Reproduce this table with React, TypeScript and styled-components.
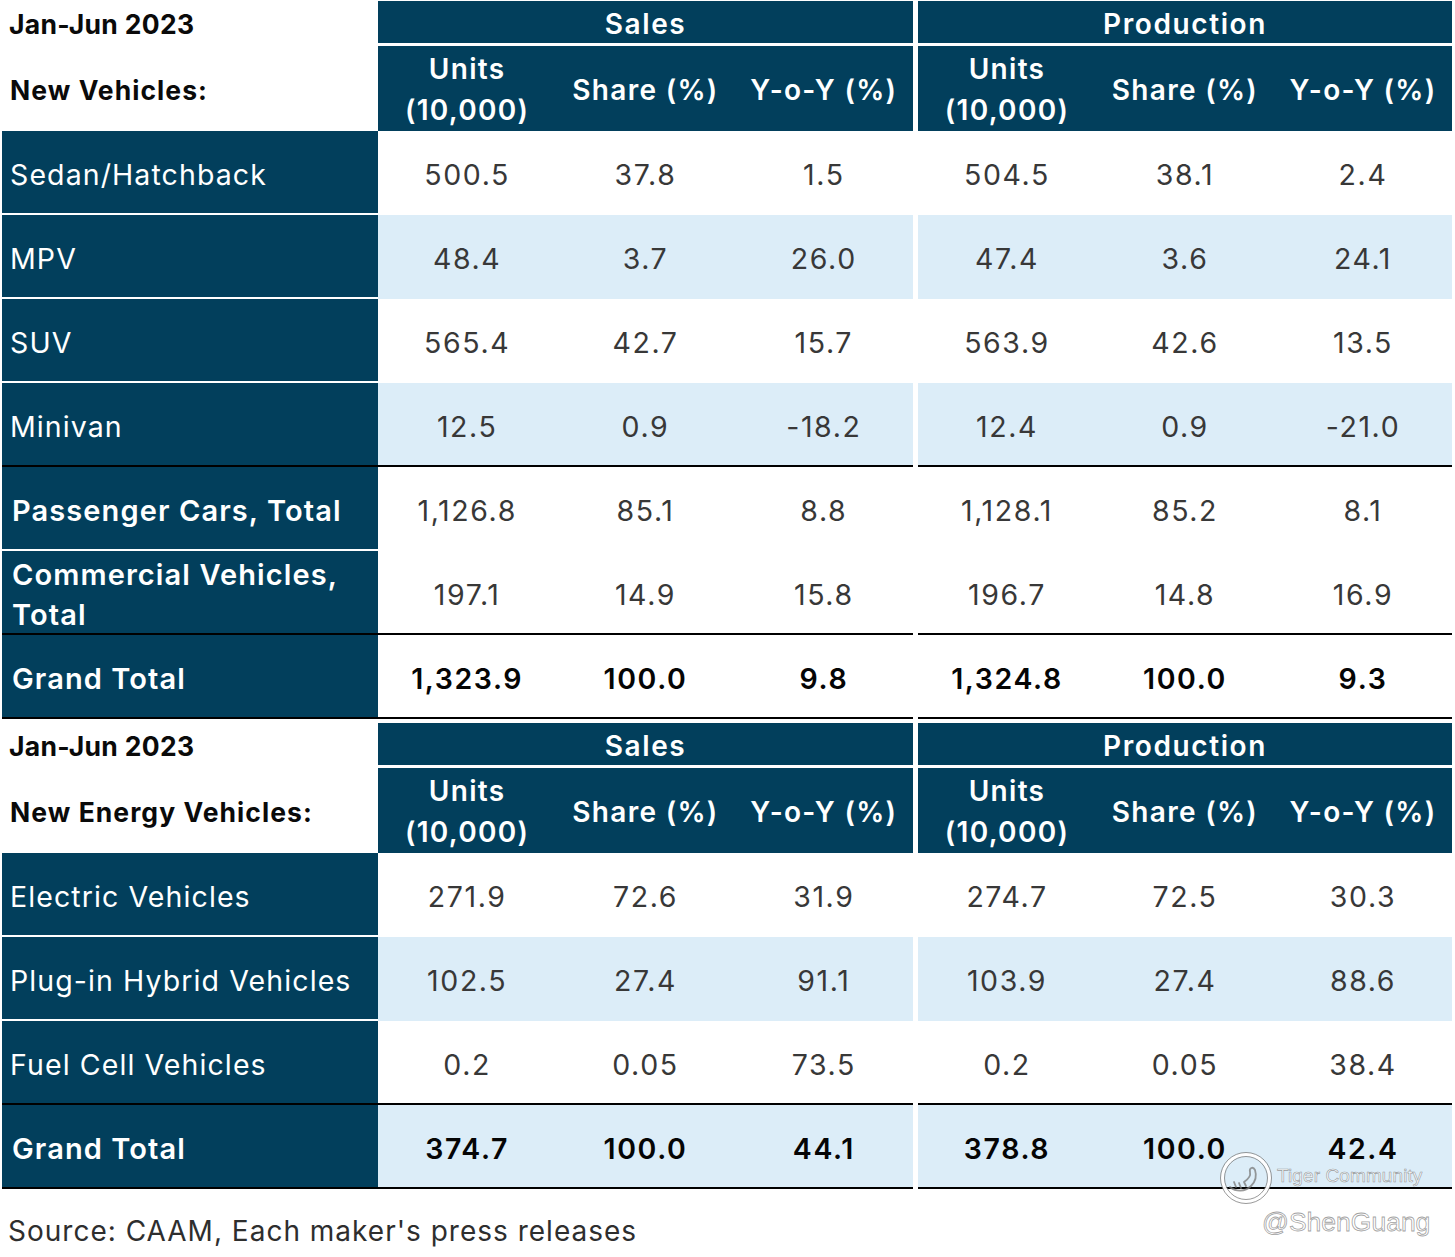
import React from "react";
import styled, { createGlobalStyle } from "styled-components";

const NAVY = "#023f5c";
const LIGHT = "#dcedf8";

const Global = createGlobalStyle`
  html, body { margin: 0; padding: 0; background: #ffffff; }
  body { font-family: Inter, "Noto Sans", "Liberation Sans", sans-serif; }
`;

const Page = styled.div`
  position: relative;
  width: 1455px;
  height: 1257px;
  padding: 1px 0 0 2px;
  box-sizing: border-box;
  overflow: hidden;
`;

const Section = styled.section<{ $gapTop?: number }>`
  display: flex;
  flex-direction: column;
  margin-top: ${(p) => p.$gapTop ?? 0}px;
`;

const HeadRow = styled.div`
  display: flex;
  align-items: stretch;
`;

const HeadLabel = styled.div`
  width: 376px;
  display: grid;
  grid-template-rows: 42px 3px 85px;
  color: #0a0a0a;
  font-weight: 700;
  font-size: 26.5px;
`;

const HeadLabelText = styled.div<{ $row: number; $indent: number; $ls: number }>`
  grid-row: ${(p) => p.$row};
  display: flex;
  align-items: center;
  padding-left: ${(p) => p.$indent}px;
  padding-top: 3px;
  letter-spacing: ${(p) => p.$ls}px;
`;

const HeadGroup = styled.div<{ $w: number; $ml: number }>`
  width: ${(p) => p.$w}px;
  margin-left: ${(p) => p.$ml}px;
  display: grid;
  grid-template-rows: 42px 85px;
  row-gap: 3px;
`;

const GroupTitle = styled.div`
  background: ${NAVY};
  color: #ffffff;
  font-size: 28px;
  font-weight: 600;
  letter-spacing: 1.6px;
  display: flex;
  align-items: center;
  justify-content: center;
  padding-top: 3px;
`;

const SubHead = styled.div`
  background: ${NAVY};
  display: grid;
  grid-template-columns: repeat(3, 1fr);
`;

const SubCell = styled.div`
  color: #ffffff;
  font-size: 28px;
  font-weight: 600;
  letter-spacing: 1.3px;
  line-height: 41px;
  display: flex;
  align-items: center;
  justify-content: center;
  text-align: center;
  padding-top: 3px;
`;

const Row = styled.div`
  display: flex;
  height: 84px;
`;

const Label = styled.div<{ $bold: boolean; $line: string }>`
  width: 376px;
  box-sizing: border-box;
  background: ${NAVY};
  border-bottom: 2px solid ${(p) => p.$line};
  color: #ffffff;
  font-size: ${(p) => (p.$bold ? 29 : 28.5)}px;
  font-weight: ${(p) => (p.$bold ? 600 : 400)};
  letter-spacing: 1.1px;
  line-height: 40px;
  padding-left: ${(p) => (p.$bold ? 10 : 8)}px;
  padding-right: 20px;
  padding-top: 5px;
  display: flex;
  align-items: center;
`;

const Group = styled.div<{ $w: number; $ml: number; $bg: string; $line: string }>`
  width: ${(p) => p.$w}px;
  margin-left: ${(p) => p.$ml}px;
  box-sizing: border-box;
  background: ${(p) => p.$bg};
  border-bottom: 2px solid ${(p) => p.$line};
  display: grid;
  grid-template-columns: repeat(3, 1fr);
`;

const Value = styled.div<{ $bold: boolean }>`
  display: flex;
  align-items: center;
  justify-content: center;
  font-size: 28.5px;
  font-weight: ${(p) => (p.$bold ? 600 : 400)};
  letter-spacing: 1.6px;
  color: ${(p) => (p.$bold ? "#050505" : "#383838")};
  padding-top: 4px;
`;

const Source = styled.div`
  margin-top: 22px;
  padding-left: 6px;
  font-size: 28px;
  line-height: 40px;
  letter-spacing: 1px;
  color: #2e2e2e;
`;

const Watermark = styled.div`
  position: absolute;
  right: 28px;
  top: 1148px;
  width: 212px;
  height: 100px;
  pointer-events: none;
`;

const WmLine = styled.div`
  position: absolute;
  left: 62px;
  top: 17px;
  font-family: "Liberation Sans", Arial, sans-serif;
  font-size: 19px;
  color: rgba(255, 255, 255, 0.85);
  -webkit-text-stroke: 0.6px rgba(120, 120, 120, 0.75);
  letter-spacing: 0.1px;
`;

const WmHandle = styled.div`
  position: absolute;
  left: 47px;
  top: 59px;
  font-family: "Liberation Sans", Arial, sans-serif;
  font-size: 26.5px;
  color: rgba(255, 255, 255, 0.9);
  -webkit-text-stroke: 0.8px rgba(130, 130, 130, 0.75);
`;

const WmLogo = styled.svg`
  position: absolute;
  left: 3px;
  top: 2px;
`;

type RowData = {
  label: string;
  sales: string[];
  prod: string[];
  shade: boolean;
  boldLabel: boolean;
  boldValues: boolean;
  black: boolean;
};

const r = (
  label: string,
  sales: string[],
  prod: string[],
  shade: boolean,
  boldLabel = false,
  boldValues = false,
  black = false
): RowData => ({ label, sales, prod, shade, boldLabel, boldValues, black });

const newVehicles: RowData[] = [
  r("Sedan/Hatchback", ["500.5", "37.8", "1.5"], ["504.5", "38.1", "2.4"], false),
  r("MPV", ["48.4", "3.7", "26.0"], ["47.4", "3.6", "24.1"], true),
  r("SUV", ["565.4", "42.7", "15.7"], ["563.9", "42.6", "13.5"], false),
  r("Minivan", ["12.5", "0.9", "-18.2"], ["12.4", "0.9", "-21.0"], true, false, false, true),
  r("Passenger Cars, Total", ["1,126.8", "85.1", "8.8"], ["1,128.1", "85.2", "8.1"], false, true),
  r("Commercial Vehicles, Total", ["197.1", "14.9", "15.8"], ["196.7", "14.8", "16.9"], false, true, false, true),
  r("Grand Total", ["1,323.9", "100.0", "9.8"], ["1,324.8", "100.0", "9.3"], false, true, true, true),
];

const nev: RowData[] = [
  r("Electric Vehicles", ["271.9", "72.6", "31.9"], ["274.7", "72.5", "30.3"], false),
  r("Plug-in Hybrid Vehicles", ["102.5", "27.4", "91.1"], ["103.9", "27.4", "88.6"], true),
  r("Fuel Cell Vehicles", ["0.2", "0.05", "73.5"], ["0.2", "0.05", "38.4"], false, false, false, true),
  r("Grand Total", ["374.7", "100.0", "44.1"], ["378.8", "100.0", "42.4"], true, true, true, true),
];

const SUB = [["Units", "(10,000)"], ["Share (%)"], ["Y-o-Y (%)"]];

const GROUPS = [
  { title: "Sales", w: 535, ml: 0 },
  { title: "Production", w: 534, ml: 5 },
];

function Table({ heading, rows, gapTop }: { heading: string; rows: RowData[]; gapTop: number }) {
  return (
    <Section $gapTop={gapTop}>
      <HeadRow>
        <HeadLabel>
          <HeadLabelText $row={1} $indent={7} $ls={0.3}>Jan-Jun 2023</HeadLabelText>
          <HeadLabelText $row={3} $indent={8} $ls={1.05}>{heading}</HeadLabelText>
        </HeadLabel>
        {GROUPS.map((g) => (
          <HeadGroup key={g.title} $w={g.w} $ml={g.ml}>
            <GroupTitle>{g.title}</GroupTitle>
            <SubHead>
              {SUB.map((lines, i) => (
                <SubCell key={i}>
                  <div>
                    {lines.map((l, j) => (
                      <div key={j}>{l}</div>
                    ))}
                  </div>
                </SubCell>
              ))}
            </SubHead>
          </HeadGroup>
        ))}
      </HeadRow>
      {rows.map((row) => {
        const line = row.black ? "#000000" : "#ffffff";
        const bg = row.shade ? LIGHT : "#ffffff";
        return (
          <Row key={row.label}>
            <Label $bold={row.boldLabel} $line={line}>{row.label}</Label>
            {[row.sales, row.prod].map((vals, gi) => (
              <Group key={gi} $w={GROUPS[gi].w} $ml={GROUPS[gi].ml} $bg={bg} $line={row.black ? "#000000" : bg}>
                {vals.map((v, vi) => (
                  <Value key={vi} $bold={row.boldValues}>{v}</Value>
                ))}
              </Group>
            ))}
          </Row>
        );
      })}
    </Section>
  );
}

export default function App() {
  return (
    <Page>
      <Global />
      <Table heading="New Vehicles:" rows={newVehicles} gapTop={0} />
      <Table heading="New Energy Vehicles:" rows={nev} gapTop={4} />
      <Source>Source: CAAM, Each maker's press releases</Source>
      <Watermark>
        <WmLogo width="56" height="56" viewBox="0 0 56 56">
          <circle cx="28" cy="28" r="23.5" fill="none" stroke="rgba(255,255,255,0.95)" strokeWidth="3.5" />
          <circle cx="28" cy="28" r="25.5" fill="none" stroke="rgba(110,110,110,0.7)" strokeWidth="1" />
          <circle cx="28" cy="28" r="21.5" fill="none" stroke="rgba(110,110,110,0.7)" strokeWidth="1" />
          <path
            d="M12 37 C18 42 27 42 33 36 C37 32 39 26 37 20 C35 16 31 18 32 22 C33 26 29 30 26 32 M16 32 l2 5 M21 33 l2 5 M26 32 l2 4"
            fill="none"
            stroke="rgba(120,120,120,0.75)"
            strokeWidth="1.8"
            strokeLinecap="round"
          />
        </WmLogo>
        <WmLine>Tiger Community</WmLine>
        <WmHandle>@ShenGuang</WmHandle>
      </Watermark>
    </Page>
  );
}
